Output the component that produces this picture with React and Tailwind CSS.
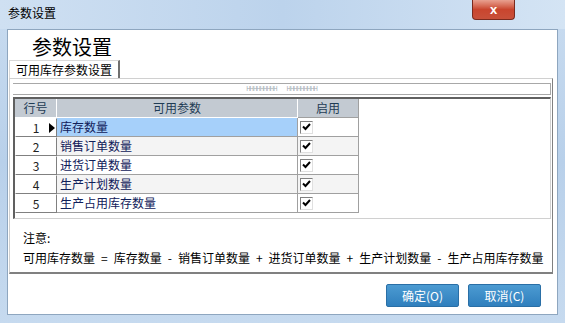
import React from "react";

const rows = [
  { no: 1, name: "库存数量", on: true },
  { no: 2, name: "销售订单数量", on: true },
  { no: 3, name: "进货订单数量", on: true },
  { no: 4, name: "生产计划数量", on: true },
  { no: 5, name: "生产占用库存数量", on: true },
];

const formula = ["可用库存数量", "=", "库存数量", "-", "销售订单数量", "+", "进货订单数量", "+", "生产计划数量", "-", "生产占用库存数量"];

const font = { fontFamily: '"Noto Sans CJK SC", "Liberation Sans", sans-serif' };

const Check = () => (
  <div className="w-[13px] h-[13px] bg-white border-t border-l border-t-[#808080] border-l-[#808080] border-b border-r border-b-[#e0e0e0] border-r-[#e0e0e0] flex items-center justify-center">
    <svg width="9" height="8" viewBox="0 0 9 8">
      <path d="M1 3.5 L3.5 6 L8 1" stroke="#000" strokeWidth="2" fill="none" />
    </svg>
  </div>
);

const Grip = () => (
  <div className="flex text-[#a0a8b0] text-[6px] leading-none tracking-[-1px]">
    {Array.from({ length: 9 }).map((_, i) => (
      <span key={i}>H</span>
    ))}
  </div>
);

export default function App() {
  return (
    <div
      className="w-[565px] h-[323px] flex flex-col bg-gradient-to-b from-[#c9dcf0] via-[#b8d0ea] to-[#c6daef] text-[12px] text-black overflow-hidden"
      style={font}
    >
      {/* Title bar */}
      <div className="h-[29px] flex items-start justify-between pl-[8px] pr-[8px] bg-gradient-to-r from-[#cfe0f2] via-[#bcd3ec] to-[#d4e4f4]">
        <div className="pt-[6px] text-[12px] leading-[14px] text-black">参数设置</div>
        <div className="mr-[42px] w-[43px] h-[20px] rounded-b-[4px] bg-gradient-to-b from-[#e8a090] via-[#c9452e] to-[#c8503a] border border-[#7a2a1e] border-t-0 flex items-center justify-center">
          <span className="text-white text-[13px] font-bold leading-none" style={{ fontFamily: '"Liberation Sans", sans-serif' }}>x</span>
        </div>
      </div>

      {/* Client area */}
      <div className="mx-[7px] flex-1 bg-white border border-[#8ea6bf] flex flex-col">
        <div className="h-[30px] pl-[24px] pt-[5px] text-[20px] leading-[24px] text-black">参数设置</div>

        {/* Tab */}
        <div className="flex pl-[1px]">
          <div className="h-[18px] px-[6px] border-t border-l border-t-[#d8d8d8] border-l-[#d8d8d8] border-r-2 border-r-[#707070] bg-white text-[12px] leading-[17px]">
            可用库存参数设置
          </div>
        </div>

        {/* Tab panel */}
        <div className="ml-[1px] mr-[4px] h-[196px] border border-t-[#d0d0d0] border-l-[#d0d0d0] border-r-[#808080] border-b-[#808080] border-b-2 flex flex-col px-[3px] pt-[4px]">
          <div className="h-[12px] border-t border-b border-r border-[#a8a8a8] flex items-center justify-center gap-[10px] mr-[-2px]">
            <Grip />
            <Grip />
          </div>
          <div className="mt-[2px] h-[122px] border-t-2 border-l-2 border-t-[#606060] border-l-[#606060] border-r border-b border-r-[#d0d0d0] border-b-[#d0d0d0] bg-white mr-[-2px]">
            <div className="flex h-[19px] text-[#1f3c55] text-[12px]">
              <div className="w-[42px] bg-[#c3cad2] border-r border-b border-white flex items-center justify-center">行号</div>
              <div className="w-[241px] bg-[#c3cad2] border-r border-b border-white flex items-center justify-center">可用参数</div>
              <div className="w-[61px] bg-[#c3cad2] border-r border-b border-[#a0a0a0] flex items-center justify-center">启用</div>
            </div>
            {rows.map((r, i) => (
              <div key={r.no} className="flex h-[19px] text-[12px]">
                <div className="w-[42px] bg-white border-t border-l border-t-white border-l-white border-r border-b border-r-[#808080] border-b-[#808080] relative flex items-center justify-center text-[#222]">
                  <span>{r.no}</span>
                  {i === 0 && (
                    <svg className="absolute right-[1px] top-[4px]" width="6" height="10" viewBox="0 0 6 10">
                      <path d="M0 0 L6 5 L0 10 Z" fill="#000" />
                    </svg>
                  )}
                </div>
                <div
                  className={`w-[241px] border-r border-b border-[#a0a0a0] pl-[3px] flex items-center text-[#10205a] ${
                    i === 0 ? "bg-[#a6d0fa]" : i % 2 === 1 ? "bg-[#f4f4f4]" : "bg-white"
                  }`}
                >
                  {r.name}
                </div>
                <div
                  className={`w-[61px] border-r border-b border-[#a0a0a0] pl-[2px] flex items-center ${
                    i % 2 === 1 ? "bg-[#f4f4f4]" : "bg-white"
                  }`}
                >
                  {r.on && <Check />}
                </div>
              </div>
            ))}
          </div>

          <div className="pl-[10px] pt-[11px] text-[12px] leading-[16px] text-black">注意:</div>
          <div className="pl-[10px] pt-[4px] flex items-center text-[12px] leading-[16px] text-black whitespace-nowrap">
            {formula.map((t, i) => (
              <span key={i} className={i % 2 === 1 ? "mx-[6px]" : ""}>
                {t}
              </span>
            ))}
          </div>
        </div>

        {/* Buttons */}
        <div className="flex justify-end gap-[9px] pr-[16px] pt-[10px]">
          <button className="w-[73px] h-[23px] rounded-[2px] bg-gradient-to-b from-[#4c9bd2] to-[#2f7fbd] border border-[#2a6fa6] text-white text-[12px] leading-none">
            确定(O)
          </button>
          <button className="w-[73px] h-[23px] rounded-[2px] bg-gradient-to-b from-[#4c9bd2] to-[#2f7fbd] border border-[#2a6fa6] text-white text-[12px] leading-none">
            取消(C)
          </button>
        </div>
      </div>
      <div className="h-[8px]" />
    </div>
  );
}
